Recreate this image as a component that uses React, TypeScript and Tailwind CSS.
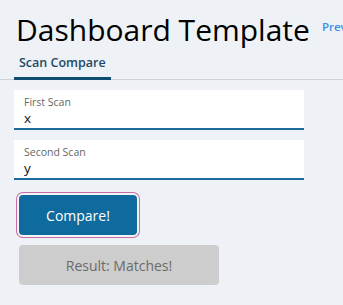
import { useState } from "react";

const FONT = "font-['Open_Sans','Noto_Sans',sans-serif]";

function ScanField({ label, value }: { label: string; value: string }) {
  return (
    <div className="w-[290px] h-10 bg-white border-b-2 border-[#1b6b9c] px-[10px] pt-[6px]">
      <div className="text-[10.5px] leading-[13px] text-[#666]">{label}</div>
      <div className="text-[13.5px] leading-[18px] text-[#111]">{value}</div>
    </div>
  );
}

export default function App() {
  const [result] = useState("Matches!");

  return (
    <div className={`${FONT} min-h-screen w-[343px] h-[305px] overflow-hidden bg-[#eef1f5]`}>
      <div className="flex items-start whitespace-nowrap pl-4 pt-[12px] h-[53px]">
        <h1 className="text-[30px] leading-[36px] text-black">Dashboard Template</h1>
        <a className="ml-[12px] mt-[6px] text-[11.5px] font-semibold text-[#3a8ee8]">Preview</a>
      </div>

      <div className="flex border-b border-[#cfd3d8] px-[14px]">
        <div className="px-[5px] pb-[4px] border-b-[3px] border-[#0f4c6e] -mb-px text-[12.5px] leading-[20px] font-semibold text-[#1d4a66]">
          Scan Compare
        </div>
      </div>

      <div className="flex flex-col gap-[10px] pl-[14px] pt-[10px]">
        <ScanField label="First Scan" value="x" />
        <ScanField label="Second Scan" value="y" />
      </div>

      <div className="pl-[19px] pt-[15px]">
        <button className="w-[118px] h-10 rounded-[4px] bg-[#0f6b9d] text-white text-[14px] ring-1 ring-[#c46fa5] ring-offset-2 ring-offset-[#f4f4f6]">
          Compare!
        </button>
        <div className="mt-[10px] w-[200px] h-10 rounded-[4px] bg-[#cecdcd] flex items-center justify-center text-[14px] text-[#6b6b6b]">
          Result: {result}
        </div>
      </div>
    </div>
  );
}
